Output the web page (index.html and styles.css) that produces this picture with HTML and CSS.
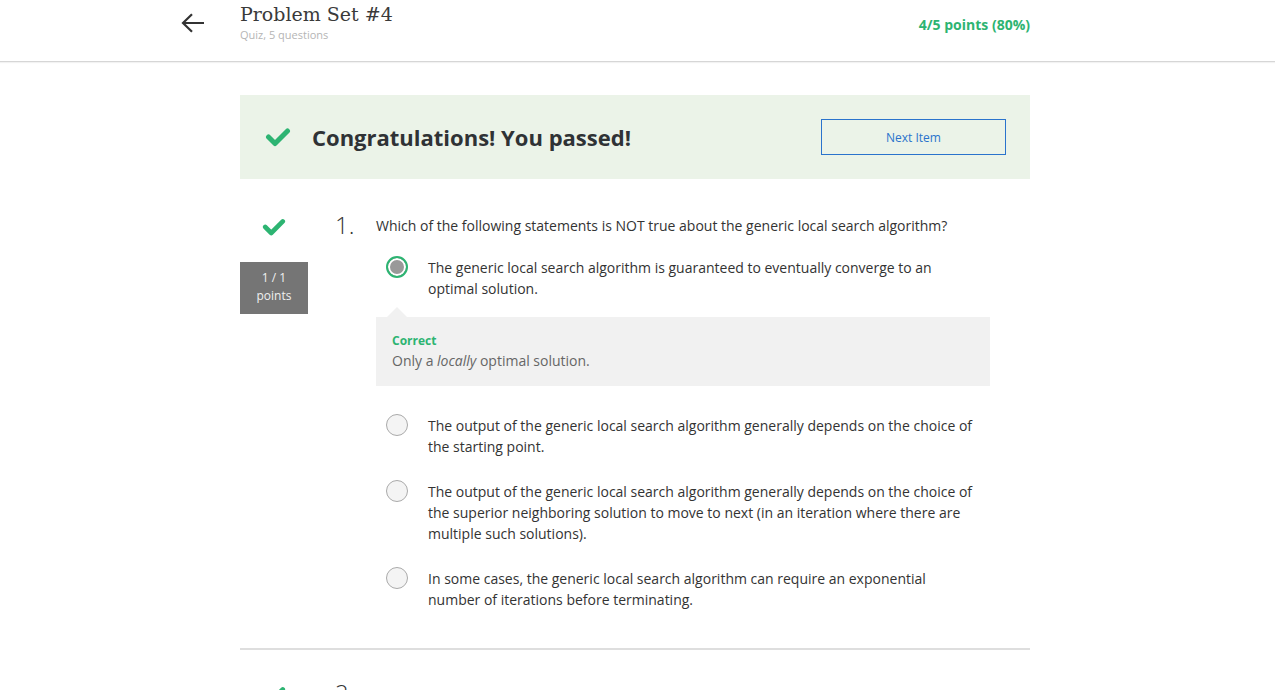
FILE: index.html
```html
<!DOCTYPE html>
<html>
<head>
<meta charset="utf-8">
<link rel="stylesheet" href="styles.css">
</head>
<body>
<header class="topbar">
  <div class="topbar-inner">
    <div class="back">
      <svg width="24" height="20" viewBox="0 0 24 20"><path d="M2 10H23M11 1.2L2 10l9 8.8" fill="none" stroke="#333" stroke-width="2.2"/></svg>
    </div>
    <div class="title-block">
      <div class="title">Problem Set #4</div>
      <div class="subtitle">Quiz, 5 questions</div>
    </div>
    <div class="score">4/5 points (80%)</div>
  </div>
</header>

<main class="content">
  <section class="banner">
    <svg class="banner-check" width="26" height="20" viewBox="0 0 26 20"><polyline points="3.5,10 10,16.5 22.5,4" fill="none" stroke="#2db472" stroke-width="5" stroke-linecap="round" stroke-linejoin="round"/></svg>
    <h1 class="banner-text">Congratulations! You passed!</h1>
    <button class="next-btn">Next Item</button>
  </section>

  <section class="question">
    <div class="q-left">
      <svg class="q-check" width="24" height="20" viewBox="0 0 26 20"><polyline points="3.5,10 10,16.5 22.5,4" fill="none" stroke="#2db472" stroke-width="5" stroke-linecap="round" stroke-linejoin="round"/></svg>
      <div class="points">1 / 1<br>points</div>
    </div>
    <div class="q-num">1.</div>
    <div class="q-body">
      <p class="q-text">Which of the following statements is NOT true about the generic local search algorithm?</p>
      <div class="options">
        <div class="option">
          <span class="radio selected"></span>
          <span class="opt-text">The generic local search algorithm is guaranteed to eventually converge to an optimal solution.</span>
        </div>
        <div class="feedback">
          <div class="fb-title">Correct</div>
          <div class="fb-text">Only a <em>locally</em> optimal solution.</div>
        </div>
        <div class="option">
          <span class="radio"></span>
          <span class="opt-text">The output of the generic local search algorithm generally depends on the choice of the starting point.</span>
        </div>
        <div class="option">
          <span class="radio"></span>
          <span class="opt-text">The output of the generic local search algorithm generally depends on the choice of the superior neighboring solution to move to next (in an iteration where there are multiple such solutions).</span>
        </div>
        <div class="option">
          <span class="radio"></span>
          <span class="opt-text">In some cases, the generic local search algorithm can require an exponential number of iterations before terminating.</span>
        </div>
      </div>
    </div>
  </section>

  <section class="question next">
    <div class="q-left">
      <svg class="q-check" width="24" height="20" viewBox="0 0 26 20"><polyline points="3.5,10 10,16.5 22.5,4" fill="none" stroke="#2db472" stroke-width="5" stroke-linecap="round" stroke-linejoin="round"/></svg>
    </div>
    <div class="q-num">2.</div>
    <div class="q-body"></div>
  </section>
</main>
</body>
</html>
```

FILE: styles.css
```css
* { box-sizing: border-box; }
html, body { margin: 0; padding: 0; background: #fff; }
body {
  font-family: "Open Sans", "Noto Sans", sans-serif;
  color: #333;
  overflow: hidden;
}

.topbar {
  height: 62px;
  border-bottom: 1px solid #d6d6d6;
  box-shadow: 0 1px 1px rgba(0,0,0,0.05);
}
.topbar-inner {
  margin-left: 181px;
  width: 849px;
  display: flex;
  align-items: flex-start;
}
.back {
  width: 59px;
  padding-top: 13px;
  line-height: 0;
}
.title-block { flex: 1; }
.title {
  font-family: "DejaVu Serif", "Liberation Serif", serif;
  font-size: 19px;
  line-height: 28px;
  color: #3a3a3a;
}
.subtitle {
  font-size: 11px;
  line-height: 14px;
  color: #b5b5b5;
}
.score {
  padding-top: 15px;
  font-size: 14px;
  font-weight: 700;
  color: #2db472;
}

.content {
  margin-left: 240px;
  width: 790px;
}

.banner {
  margin-top: 33px;
  height: 84px;
  background: #ebf3e8;
  display: flex;
  align-items: center;
  padding: 0 24px 0 25px;
}
.banner-check { flex: none; }
.banner-text {
  flex: 1;
  margin: 0 0 0 21px;
  font-size: 22px;
  font-weight: 700;
  color: #2f3235;
}
.next-btn {
  width: 185px;
  height: 36px;
  border: 1px solid #2a73cc;
  background: transparent;
  color: #2a73cc;
  font-family: "Open Sans", sans-serif;
  font-size: 12px;
  padding: 0;
}

.question {
  display: flex;
  padding-top: 36px;
  padding-bottom: 38px;
  border-bottom: 2px solid #dedede;
}
.question.next { border-bottom: none; padding-top: 33px; }
.q-left {
  width: 68px;
  display: flex;
  flex-direction: column;
  align-items: center;
}
.q-check { margin-top: 2px; }
.points {
  margin-top: 25px;
  width: 68px;
  height: 52px;
  background: #757575;
  color: #f0f0f0;
  font-size: 12px;
  line-height: 18px;
  text-align: center;
  padding-top: 7px;
}
.q-num {
  margin-left: 27px;
  width: 41px;
  font-size: 24px;
  font-weight: 300;
  line-height: 20px;
  color: #333;
}
.q-body { width: 614px; }
.q-text {
  margin: 0;
  font-size: 14px;
  line-height: 21px;
  color: #333;
}
.options { margin-top: 21px; }
.option {
  display: flex;
  align-items: flex-start;
  padding-left: 10px;
  margin-bottom: 24px;
}
.option:last-child { margin-bottom: 0; }
.radio {
  flex: none;
  width: 22px;
  height: 22px;
  border-radius: 50%;
  border: 1px solid #aaa;
  background: #f4f4f4;
  margin-top: -1px;
  margin-right: 20px;
}
.radio.selected {
  border: 2px solid #2db472;
  background: #999;
  box-shadow: inset 0 0 0 2px #fff;
}
.opt-text {
  width: 548px;
  font-size: 14px;
  line-height: 21px;
  color: #333;
}
.feedback {
  position: relative;
  margin-top: -6px;
  margin-bottom: 29px;
  background: #f1f1f1;
  padding: 15px 16px 15px;
}
.feedback::before {
  content: "";
  position: absolute;
  top: -10px;
  left: 11px;
  border-left: 10px solid transparent;
  border-right: 10px solid transparent;
  border-bottom: 10px solid #f1f1f1;
}
.fb-title {
  font-size: 12px;
  font-weight: 700;
  line-height: 18px;
  color: #2db472;
}
.fb-text {
  font-size: 14px;
  line-height: 21px;
  color: #666;
}
.fb-text em { font-style: italic; }
```
